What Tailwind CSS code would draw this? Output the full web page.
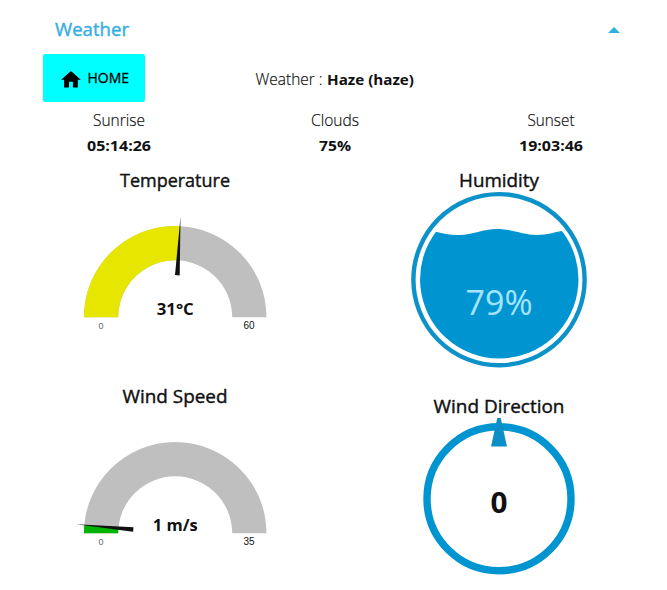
<!DOCTYPE html>
<html lang="en">
<head>
<meta charset="utf-8">
<title>Weather</title>
<script src="https://cdn.jsdelivr.net/npm/@tailwindcss/browser@4"></script>
</head>
<body class="bg-white text-[#111] font-['Open_Sans','Noto_Sans',sans-serif] w-[667px] h-[590px] overflow-hidden">
<header class="h-[54px] pl-[55px] pr-[47px] pt-[5px] flex items-center justify-between text-[#35aede]">
  <svg class="w-20 h-7" viewBox="0 0 80 28"><text x="0" y="18" dy="1.5" font-size="18" fill="currentColor" stroke="currentColor" stroke-width=".4" textLength="74" lengthAdjust="spacingAndGlyphs">Weather</text></svg>
  <svg class="w-3 h-1.5" viewBox="0 0 12 6"><path d="M0 6L6 0L12 6Z" fill="#2fb1dd"/></svg>
</header>
<section class="h-12 pl-[43px] flex">
  <button class="w-[102px] h-12 rounded-[2px] bg-[#00ffff] text-black">
    <svg class="w-[102px] h-12" viewBox="0 0 102 48"><path transform="translate(16.2 14) scale(.98)" d="M10 20v-6h4v6h5v-8h3L12 3 2 12h3v8z"/><text x="44.5" y="29" font-size="14" stroke="#000" stroke-width=".3" textLength="41.5" lengthAdjust="spacingAndGlyphs">HOME</text></svg>
  </button>
  <svg class="ml-[100px] w-[180px] h-12" viewBox="0 0 180 48" font-size="15.5" fill="#111"><text x="10.5" y="31" font-weight="300" stroke="#111" stroke-width=".2" textLength="67" lengthAdjust="spacingAndGlyphs">Weather :</text><text x="82" y="31" font-weight="700" font-size="15" textLength="87" lengthAdjust="spacingAndGlyphs">Haze (haze)</text></svg>
</section>
<section class="pl-[11px] h-[66px] grid grid-cols-[216px_216px_216px]">
  <svg class="w-[216px] h-[66px]" viewBox="0 0 216 66" font-size="15.5" text-anchor="middle" fill="#111"><text x="108" y="24.4" font-weight="300" stroke="#111" stroke-width=".2" textLength="52" lengthAdjust="spacingAndGlyphs">Sunrise</text><text x="108" y="49" font-weight="700" font-size="15" textLength="64" lengthAdjust="spacingAndGlyphs">05:14:26</text></svg>
  <svg class="w-[216px] h-[66px]" viewBox="0 0 216 66" font-size="15.5" text-anchor="middle" fill="#111"><text x="108" y="24.4" font-weight="300" stroke="#111" stroke-width=".2" textLength="48" lengthAdjust="spacingAndGlyphs">Clouds</text><text x="108" y="49" font-weight="700" font-size="15" textLength="32" lengthAdjust="spacingAndGlyphs">75%</text></svg>
  <svg class="w-[216px] h-[66px]" viewBox="0 0 216 66" font-size="15.5" text-anchor="middle" fill="#111"><text x="108" y="24.4" font-weight="300" stroke="#111" stroke-width=".2" textLength="47" lengthAdjust="spacingAndGlyphs">Sunset</text><text x="108" y="49" font-weight="700" font-size="15" textLength="64" lengthAdjust="spacingAndGlyphs">19:03:46</text></svg>
</section>
<main class="pl-[13px] grid grid-cols-[324px_324px]">
  <div class="flex flex-col">
    <!-- Temperature -->
    <svg class="w-[324px] h-[216px]" viewBox="13 168 324 216" text-anchor="middle" fill="#111">
      <text x="175" y="186.5" font-size="18" stroke="#111" stroke-width=".4" textLength="110" lengthAdjust="spacingAndGlyphs">Temperature</text>
      <path d="M83.9 317.3A91.3 91.3 0 0 1 266.5 317.3H232.2A57 57 0 0 0 118.2 317.3Z" fill="#bfbfbf"/>
      <path d="M83.9 317.3A91.3 91.3 0 0 1 180 226.1L178.2 260.4A57 57 0 0 0 118.2 317.3Z" fill="#e6e600"/>
      <path d="M180.5 217L179.7 275.4L175 275.1Z" fill="#111"/>
      <text x="175.3" y="314.6" font-size="16" font-weight="700" textLength="37" lengthAdjust="spacingAndGlyphs">31°C</text>
      <text x="101" y="329" font-size="9" font-family="Liberation Sans, sans-serif" fill="#666">0</text>
      <text x="249" y="329.2" font-size="10" font-family="Liberation Sans, sans-serif">60</text>
    </svg>
    <!-- Wind speed -->
    <svg class="w-[324px] h-[200px]" viewBox="13 384 324 200" text-anchor="middle" fill="#111">
      <text x="175" y="402.5" font-size="18" stroke="#111" stroke-width=".4" textLength="105" lengthAdjust="spacingAndGlyphs">Wind Speed</text>
      <path d="M83.9 533.3A91.3 91.3 0 0 1 266.5 533.3H232.2A57 57 0 0 0 118.2 533.3Z" fill="#bfbfbf"/>
      <path d="M83.9 533.3A91.3 91.3 0 0 1 84.3 525.1L118.4 528.2A57 57 0 0 0 118.2 533.3Z" fill="#00b300"/>
      <path d="M76 524.2L133.5 527.2L133.1 531.8Z" fill="#111"/>
      <text x="175.3" y="530.6" font-size="16" font-weight="700" textLength="45" lengthAdjust="spacingAndGlyphs">1 m/s</text>
      <text x="101" y="545" font-size="9" font-family="Liberation Sans, sans-serif" fill="#666">0</text>
      <text x="249" y="545.2" font-size="10" font-family="Liberation Sans, sans-serif">35</text>
    </svg>
  </div>
  <div class="flex flex-col">
    <!-- Humidity -->
    <svg class="w-[324px] h-[216px]" viewBox="337 168 324 216" text-anchor="middle" fill="#111">
      <text x="499" y="186.5" font-size="18" stroke="#111" stroke-width=".4" textLength="80" lengthAdjust="spacingAndGlyphs">Humidity</text>
      <circle cx="499" cy="279.7" r="85.6" fill="none" stroke="#0c92c9" stroke-width="4.4"/>
      <path d="M436 231.7C443 233.4 450 235.2 459 235C473 234.8 483 229 497 229C512 229 523 235 537 235C548 235 554 232 562 231A79.2 79.2 0 1 1 436 231.7Z" fill="#0095d0"/>
      <text x="499" y="315" font-size="35" font-weight="400" fill="#a4e4ff" textLength="67" lengthAdjust="spacingAndGlyphs">79%</text>
    </svg>
    <!-- Wind direction -->
    <svg class="w-[324px] h-[200px]" viewBox="337 384 324 200" text-anchor="middle" fill="#111">
      <text x="499" y="412.5" font-size="18" stroke="#111" stroke-width=".4" textLength="131" lengthAdjust="spacingAndGlyphs">Wind Direction</text>
      <circle cx="499" cy="498.8" r="72" fill="none" stroke="#0095d0" stroke-width="7.4"/>
      <path d="M497.3 418H500.7L507 446.5H491Z" fill="#0c8fc6"/>
      <text x="499" y="512.6" font-size="28" font-weight="700" textLength="17" lengthAdjust="spacingAndGlyphs">0</text>
    </svg>
  </div>
</main>
</body>
</html>
